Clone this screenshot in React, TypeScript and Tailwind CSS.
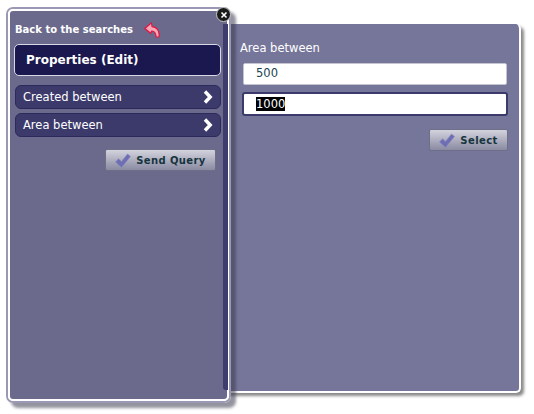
const FONT = "font-['DejaVu_Sans',Verdana,sans-serif]";

function Check() {
  return (
    <svg width="16" height="15" viewBox="0 0 16 15" className="shrink-0">
      <path d="M0.5 9 L3.5 5.8 L6.5 8.5 L12.5 1 L15.5 3.5 L6.5 14.5 Z" fill="#6e6eb4" stroke="#8c8cc0" strokeWidth="0.6" />
    </svg>
  );
}

function Chevron() {
  return (
    <svg width="10" height="14" viewBox="0 0 10 14" className="shrink-0">
      <path d="M2 1.5 L7.2 7 L2 12.5" fill="none" stroke="#ffffff" strokeWidth="3.4" />
    </svg>
  );
}

function BackArrow() {
  return (
    <svg width="16" height="16" viewBox="0 0 16 16" className="shrink-0">
      <path
        d="M7.5 0.8 L0.8 6.5 L7 11.5 L7.5 9 C10 8.8 11.8 10.5 12.2 15 L15 15 C15.8 8.5 12.5 4.8 8 4.6 Z"
        fill="#f7a8b6"
        stroke="#e8103c"
        strokeWidth="1.1"
        strokeLinejoin="round"
      />
    </svg>
  );
}

function CloseBadge() {
  return (
    <div className="absolute -right-[2px] -top-[2px] flex h-[15px] w-[15px] items-center justify-center rounded-full border border-[#c8c8c8] bg-[#1a1a1a]">
      <svg width="8" height="8" viewBox="0 0 8 8">
        <path d="M1.5 1.5 L6.5 6.5 M6.5 1.5 L1.5 6.5" stroke="#ffffff" strokeWidth="1.6" />
      </svg>
    </div>
  );
}

function GreyButton({ label, className }: { label: string; className: string }) {
  return (
    <button
      className={`flex h-[22px] items-center justify-center gap-[5px] rounded-[2px] border border-[#6e6e88] bg-gradient-to-b from-[#d4d4de] to-[#8a8aa2] text-[10px] font-bold tracking-[0.4px] text-[#16343e] ${className}`}
    >
      <Check />
      {label}
    </button>
  );
}

function NavRow({ label }: { label: string }) {
  return (
    <div className="flex h-[24px] items-center justify-between rounded-[6px] border border-[#2c2a5c] bg-[#3c3a6a] pl-[7px] pr-[7px] text-[11.5px] text-white">
      <span className="pt-[2px]">{label}</span>
      <Chevron />
    </div>
  );
}

export default function App() {
  return (
    <div className={`${FONT} flex h-[414px] w-[534px] items-start overflow-hidden bg-white pl-[6px] pt-[7px]`}>
      <div className="relative z-10 h-[396px] w-[225px] shrink-0 rounded-[7px] border-2 border-[#9a98b4] shadow-[5px_5px_3px_rgba(60,60,80,0.55)]">
        <div className="flex h-full flex-col rounded-[5px] border-2 border-white bg-[#6b6a8c] pl-[5px] pr-[6px]">
          <div className="mt-[9px] flex h-[20px] items-center gap-[11px] text-[10px] font-bold text-white">
            <span className="-mt-[1px]">Back to the searches</span>
            <BackArrow />
          </div>
          <div className="-ml-px mt-[4px] flex h-[32px] items-center rounded-[5px] border border-[#d8d8e4] bg-[#1a184e] pl-[11px] text-[12px] font-bold text-white">
            Properties (Edit)
          </div>
          <div className="mt-[9px] flex flex-col gap-[4px]">
            <NavRow label="Created between" />
            <NavRow label="Area between" />
          </div>
          <div className="mr-[5px] mt-[12px] flex justify-end">
            <GreyButton label="Send Query" className="w-[111px]" />
          </div>
        </div>
        <div className="absolute bottom-[11px] right-[1px] top-[15px] w-[5px] rounded-bl-[3px] bg-[#3e3c6c]" />
        <CloseBadge />
      </div>

      <div className="-ml-[8px] mt-[17px] h-[369px] w-[298px] shrink-0 rounded-[5px] border-b-2 border-r-2 border-white bg-[#76769a] pl-[17px] pr-[11px] pt-[17px] shadow-[3px_3px_3px_rgba(60,60,60,0.6)]">
        <div className="text-[11.5px] leading-[14px] text-white">Area between</div>
        <div className="ml-[3px] mr-[1px] mt-[8px] flex h-[22px] items-center rounded-[2px] border border-[#c4c4d0] bg-white pl-[12px] text-[11.5px] text-[#1c4450]">
          500
        </div>
        <div className="ml-[2px] mt-[7px] flex h-[24px] items-center rounded-[3px] border-2 border-[#3c3a6a] bg-white pl-[12px] text-[11.5px] text-white">
          <span className="bg-black leading-[14px]">1000</span>
        </div>
        <div className="mt-[13px] flex justify-end">
          <GreyButton label="Select" className="w-[79px]" />
        </div>
      </div>
    </div>
  );
}
